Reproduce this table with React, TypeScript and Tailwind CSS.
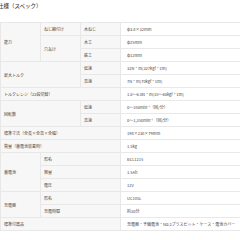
import React from "react";

type Cell = { text: string; rowSpan?: number; colSpan?: number; label?: boolean };

const rows: Cell[][] = [
  [
    { text: "能力", rowSpan: 3, label: true },
    { text: "ねじ締付け", label: true },
    { text: "木ねじ", label: true },
    { text: "φ3.8×32mm" },
  ],
  [
    { text: "穴あけ", rowSpan: 2, label: true },
    { text: "木工", label: true },
    { text: "φ25mm" },
  ],
  [{ text: "鉄工", label: true }, { text: "φ12mm" }],
  [
    { text: "最大トルク", rowSpan: 2, colSpan: 2, label: true },
    { text: "低速", label: true },
    { text: "32N・m(327kgf・cm)" },
  ],
  [{ text: "高速", label: true }, { text: "7N・m(70kgf・cm)" }],
  [
    { text: "トルクレンジ（22段切替）", colSpan: 3, label: true },
    { text: "1.0〜6.0N・m(10〜60kgf・cm)" },
  ],
  [
    { text: "回転数", rowSpan: 2, colSpan: 2, label: true },
    { text: "低速", label: true },
    { text: "0〜350min⁻¹（回/分）" },
  ],
  [{ text: "高速", label: true }, { text: "0〜1,350min⁻¹（回/分）" }],
  [
    { text: "標準寸法（全長×全高×全幅）", colSpan: 3, label: true },
    { text: "198×230×79mm" },
  ],
  [
    { text: "質量（蓄電池装着時）", colSpan: 3, label: true },
    { text: "1.5kg" },
  ],
  [
    { text: "蓄電池", rowSpan: 3, label: true },
    { text: "形名", colSpan: 2, label: true },
    { text: "BCL1215" },
  ],
  [{ text: "容量", colSpan: 2, label: true }, { text: "1.5Ah" }],
  [{ text: "電圧", colSpan: 2, label: true }, { text: "12V" }],
  [
    { text: "充電器", rowSpan: 2, label: true },
    { text: "形名", colSpan: 2, label: true },
    { text: "UC10SL" },
  ],
  [{ text: "充電時間", colSpan: 2, label: true }, { text: "約30分" }],
  [
    { text: "標準付属品", colSpan: 3, label: true },
    { text: "充電器・予備電池・No.2プラスビット・ケース・電池カバー" },
  ],
];

export default function App() {
  return (
    <div
      className="w-[240px] h-[240px] overflow-hidden bg-white text-[#444]"
      style={{ fontFamily: '"Noto Sans CJK JP", "Noto Sans", sans-serif' }}
    >
      <h2 className="-ml-[2px] pt-[1px] h-[22px] text-[5.5px] leading-[10px] font-medium text-[#444]">
        仕様（スペック）
      </h2>
      <table className="w-[240px] table-fixed border-collapse text-[4px] leading-[12px]">
        <colgroup>
          <col className="w-[40px]" />
          <col className="w-[40px]" />
          <col className="w-[40px]" />
          <col className="w-[120px]" />
        </colgroup>
        <tbody>
          {rows.map((r, i) => (
            <tr key={i} className="h-[13px]">
              {r.map((c, j) => (
                <td
                  key={j}
                  rowSpan={c.rowSpan}
                  colSpan={c.colSpan}
                  className={
                    c.label
                      ? "border border-[#e8e8e8] bg-[#f7f7f7] pl-[3px] align-middle whitespace-nowrap"
                      : "border border-[#e8e8e8] bg-white pl-[6px] align-middle whitespace-nowrap"
                  }
                >
                  {c.text}
                </td>
              ))}
            </tr>
          ))}
        </tbody>
      </table>
    </div>
  );
}
